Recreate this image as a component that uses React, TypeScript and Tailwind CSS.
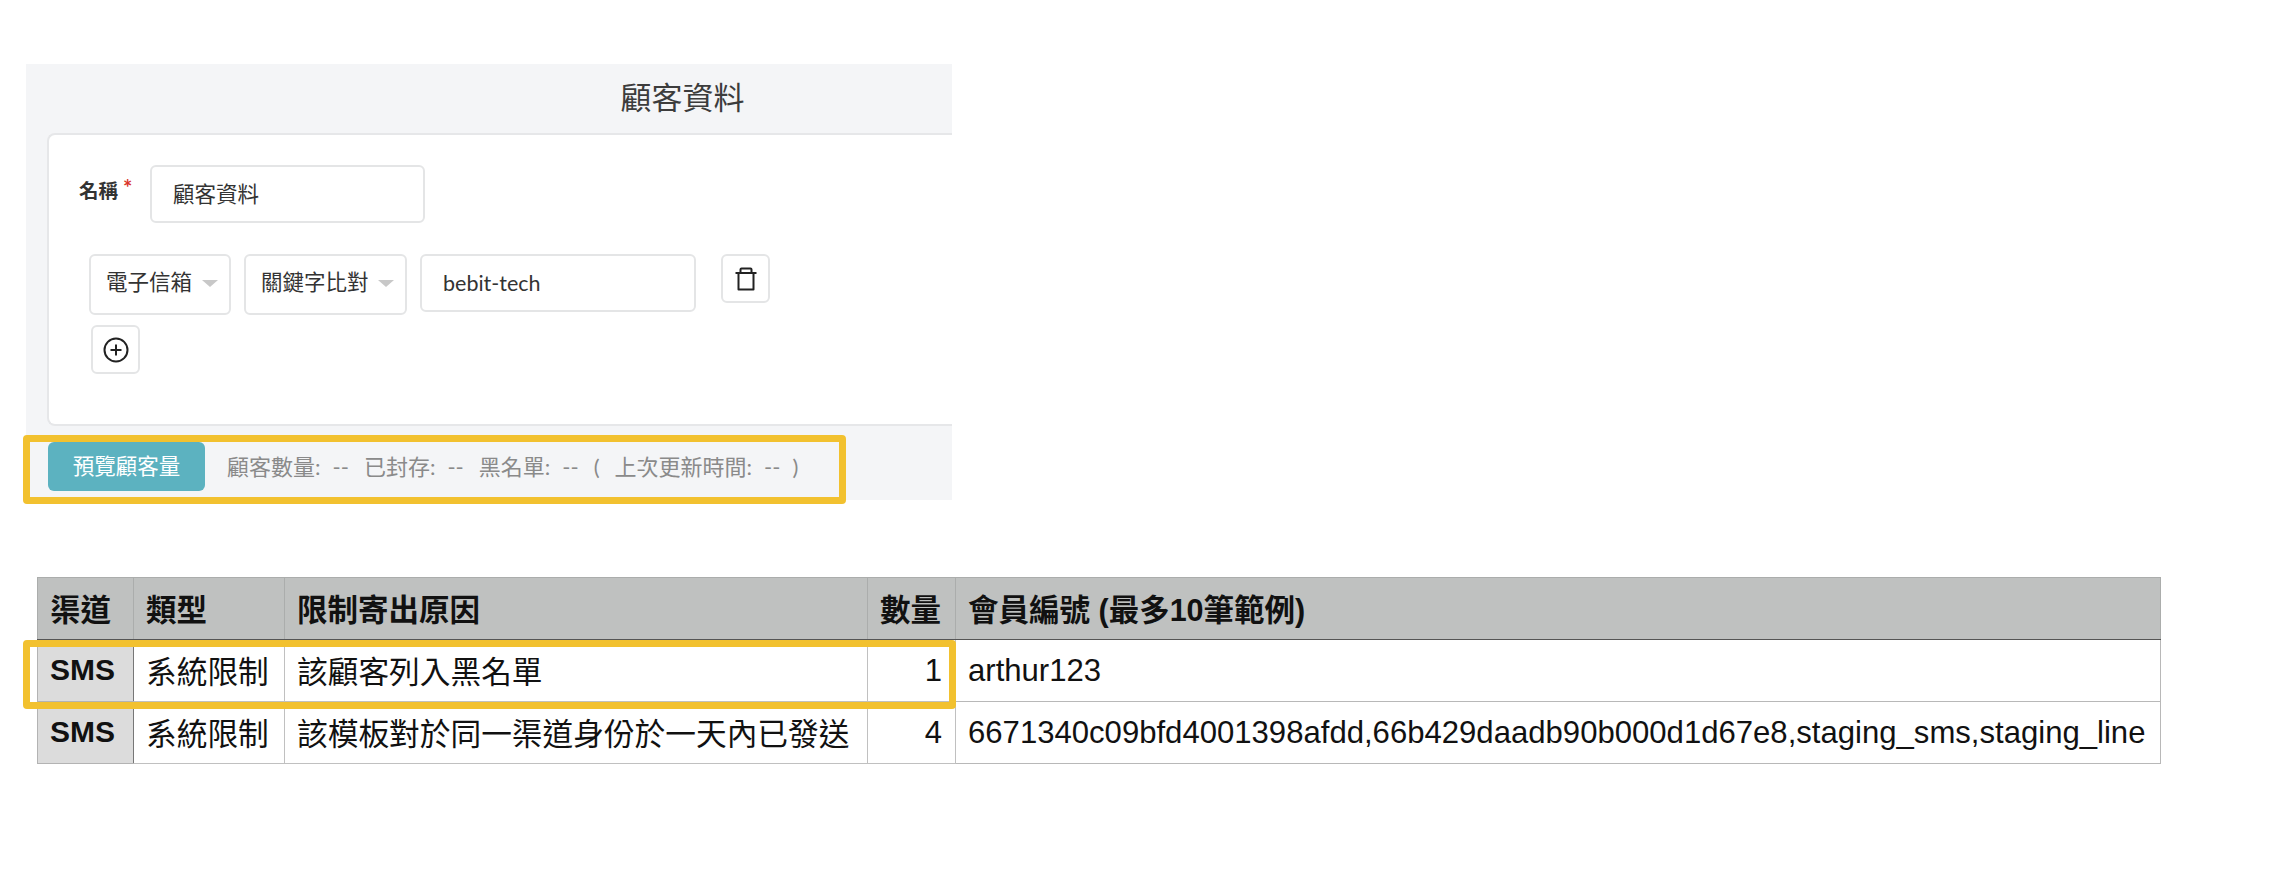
const UI_FONT = "font-['Lato','Noto_Sans_CJK_TC',sans-serif]";

function Select({ label, width }: { label: string; width: string }) {
  return (
    <div className={`${width} flex h-[61px] items-start justify-between rounded-[6px] border-2 border-[#e4e5e6] bg-white pl-[15px] pr-[11px] pt-[11px] text-[21.5px] leading-[30px] text-[#333]`}>
      <span>{label}</span>
      <span className="mt-[13px] h-0 w-0 border-x-[8px] border-t-[7px] border-x-transparent border-t-[#c8c8c8]" />
    </div>
  );
}

function IconButton({ children }: { children: React.ReactNode }) {
  return (
    <button className="flex h-[49px] w-[49px] items-center justify-center rounded-[6px] border-2 border-[#e4e5e6] bg-white text-[#222]">
      {children}
    </button>
  );
}

function CustomerPanel() {
  return (
    <div className={`w-[926px] bg-[#f4f5f7] ${UI_FONT}`}>
      <h2 className="flex h-[69px] items-center justify-center pb-[2px] pl-[387px] text-[31px] font-normal leading-none text-[#3c3c3c]">
        顧客資料
      </h2>
      <div className="ml-[21px] h-[293px] rounded-l-[8px] border-y-2 border-l-2 border-[#e6e7e9] bg-white pl-[30px] pt-[30px]">
        <div className="flex items-start">
          <label className="mt-[11px] w-[71px] text-[19.5px] font-bold leading-[30px] text-[#333]">
            名稱<span className="relative -top-[2px] ml-[5px] text-[22px] leading-none text-[#d9342b]">*</span>
          </label>
          <div className="flex h-[58px] w-[275px] items-center rounded-[6px] border-2 border-[#e4e5e6] pl-[21px] text-[21.5px] text-[#333]">
            顧客資料
          </div>
        </div>
        <div className="ml-[10px] mt-[31px] flex items-start">
          <Select label="電子信箱" width="w-[142px]" />
          <div className="ml-[13px]">
            <Select label="關鍵字比對" width="w-[163px]" />
          </div>
          <div className="ml-[13px] flex h-[58px] w-[276px] items-center rounded-[6px] border-2 border-[#e4e5e6] pl-[21px] text-[21.5px] text-[#333]">
            bebit-tech
          </div>
          <div className="ml-[25px]">
            <IconButton>
              <svg width="26" height="26" viewBox="0 0 26 26" fill="none" stroke="currentColor" strokeWidth="2" strokeLinejoin="round">
                <path d="M2.5 7h21" />
                <path d="M7.5 7V3.5a1 1 0 0 1 1-1h9a1 1 0 0 1 1 1V7" />
                <path d="M5.5 7v16.5h15V7" />
              </svg>
            </IconButton>
          </div>
        </div>
        <div className="ml-[12px] mt-[10px]">
          <IconButton>
            <svg width="26" height="26" viewBox="0 0 26 26" fill="none" stroke="currentColor" strokeWidth="2">
              <circle cx="13" cy="13" r="11.5" />
              <path d="M13 7.5v11M7.5 13h11" />
            </svg>
          </IconButton>
        </div>
      </div>
      <div className="flex h-[74px] items-start pl-[22px] pt-[16px]">
        <button className="h-[49px] w-[157px] rounded-[6px] bg-[#5cb2c0] text-[21.5px] font-normal text-white">
          預覽顧客量
        </button>
        <p className="ml-[22px] flex h-[49px] items-center text-[22px] text-[#8a8a8a]">
          <span className="flex gap-[12px]">顧客數量:<span>--</span></span>
          <span className="ml-[15px] flex gap-[12px]">已封存:<span>--</span></span>
          <span className="ml-[15px] flex gap-[12px]">黑名單:<span>--</span></span>
          <span className="ml-[15px] flex gap-[12px]">
            <span className="mr-[3px]">(</span>上次更新時間:<span>--</span><span>)</span>
          </span>
        </p>
      </div>
    </div>
  );
}

const ROWS = [
  { channel: "SMS", type: "系統限制", reason: "該顧客列入黑名單", count: 1, ids: "arthur123" },
  {
    channel: "SMS",
    type: "系統限制",
    reason: "該模板對於同一渠道身份於一天內已發送",
    count: 4,
    ids: "6671340c09bfd4001398afdd,66b429daadb90b000d1d67e8,staging_sms,staging_line",
  },
];

const HEADERS = ["渠道", "類型", "限制寄出原因", "數量", "會員編號 (最多10筆範例)"];

function LimitTable() {
  return (
    <table className="w-[2124px] table-fixed border-collapse font-['Liberation_Sans','Noto_Sans_CJK_TC',sans-serif] text-[31px] leading-none text-[#111]">
      <colgroup>
        <col className="w-[96px]" />
        <col className="w-[151px]" />
        <col className="w-[583px]" />
        <col className="w-[88px]" />
        <col />
      </colgroup>
      <thead>
        <tr className="h-[62px] bg-[#bfc1c0]">
          {HEADERS.map(h => (
            <th key={h} className="border border-[#abadac] border-b-[#555] px-[12px] pt-[3px] text-left text-[30.5px] font-bold">
              {h}
            </th>
          ))}
        </tr>
      </thead>
      <tbody>
        {ROWS.map((r, i) => (
          <tr key={i} className="h-[62px]">
            <td className="border border-[#b3b3b3] border-r-[#777] bg-[#dcdcdc] px-[12px] pb-[2px] text-[30px] font-bold">{r.channel}</td>
            <td className="whitespace-nowrap border border-[#c0c0c0] px-[12px] pt-[6px] text-[30.7px]">{r.type}</td>
            <td className="whitespace-nowrap border border-[#c0c0c0] px-[12px] pt-[6px] text-[30.7px]">{r.reason}</td>
            <td className="border border-[#c0c0c0] px-[13px] text-right">{r.count}</td>
            <td className="whitespace-nowrap border border-[#b8b8b8] px-[12px] text-[31.1px]">{r.ids}</td>
          </tr>
        ))}
      </tbody>
    </table>
  );
}

export default function App() {
  return (
    <div className="relative min-h-[872px] w-[2277px] overflow-hidden bg-white pl-[26px] pt-[64px]">
      <CustomerPanel />
      <div className="ml-[11px] mt-[77px]">
        <LimitTable />
      </div>
      {/* annotation frames drawn over the screenshots */}
      <div className="absolute left-[23px] top-[435px] h-[69px] w-[823px] rounded-[4px] border-[7px] border-[#f2c12f]" />
      <div className="absolute left-[23px] top-[640px] h-[69px] w-[933px] rounded-[4px] border-[7px] border-[#f2c12f]" />
    </div>
  );
}
